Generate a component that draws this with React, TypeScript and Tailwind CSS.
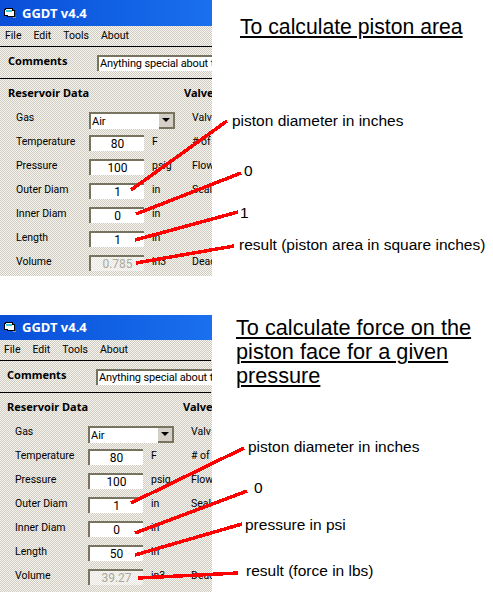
const uiFont = "font-['Roboto','Noto_Sans',sans-serif]";
const boldFont = "font-['Noto_Sans','DejaVu_Sans',sans-serif]";

type Row = { label: string; value: string; unit: string; side: string; muted?: boolean };

const pistonRows: Row[] = [
  { label: "Temperature", value: "80", unit: "F", side: "# of" },
  { label: "Pressure", value: "100", unit: "psig", side: "Flow" },
  { label: "Outer Diam", value: "1", unit: "in", side: "Seal" },
  { label: "Inner Diam", value: "0", unit: "in", side: "" },
  { label: "Length", value: "1", unit: "in", side: "" },
  { label: "Volume", value: "0.785", unit: "in3", side: "Dead", muted: true },
];

const forceRows: Row[] = [
  ...pistonRows.slice(0, 4),
  { label: "Length", value: "50", unit: "in", side: "" },
  { label: "Volume", value: "39.27", unit: "in3", side: "Dead", muted: true },
];

function WindowIcon() {
  return (
    <svg width="12" height="11" viewBox="0 0 12 11" shapeRendering="crispEdges" className="shrink-0">
      <path d="M1.5 0.5H8.5V2.5H10.5V8.5H3.5V7.5H0.5V1.5H1.5Z" fill="#fff" stroke="#000" />
      <path d="M2 2H8V4H2Z" fill="#38c8d8" />
      <path d="M9 9H12V10H9Z" fill="#9a9a90" />
    </svg>
  );
}

function Field({ value, muted }: { value: string; muted?: boolean }) {
  return (
    <div
      className={`w-[55px] h-[16px] mt-[2px] shrink-0 border-t-2 border-l-2 border-t-[#77735f] border-l-[#77735f] flex items-center justify-center text-[12px] leading-none ${muted ? "bg-white/50 text-[#aaa99a]" : "bg-white text-black"}`}
    >
      {value}
    </div>
  );
}

function GgdtWindow({ rows, titleHeight, shift, height }: { rows: Row[]; titleHeight: string; shift: string; height: string }) {
  return (
    <div
      className={`w-[212px] ${height} overflow-hidden shrink-0 ${uiFont} text-[10.5px] text-black bg-[url(data:image/svg+xml,%3Csvg%20xmlns=%27http://www.w3.org/2000/svg%27%20width=%272%27%20height=%272%27%20shape-rendering=%27crispEdges%27%3E%3Crect%20width=%272%27%20height=%272%27%20fill=%27%23f6f5f0%27/%3E%3Crect%20width=%271%27%20height=%271%27%20fill=%27%23cfcbc0%27/%3E%3Crect%20x=%271%27%20y=%271%27%20width=%271%27%20height=%271%27%20fill=%27%23cfcbc0%27/%3E%3C/svg%3E)]`}
    >
      <div className={`${titleHeight} flex items-center gap-[6px] pl-[4px] bg-gradient-to-r from-[#0a4ed8] to-[#1a70ee]`}>
        <WindowIcon />
        <span className={`${boldFont} text-white text-[13px] font-bold leading-none`}>GGDT v4.4</span>
      </div>
      <div className={shift}>
        <div className="h-[20px] flex items-center gap-[12px] pl-[5px]">
          <span>File</span>
          <span>Edit</span>
          <span>Tools</span>
          <span>About</span>
        </div>
        <div className="h-[33px] flex items-center border-y border-black pl-[8px]">
          <span className={`${boldFont} text-[11px] font-bold w-[89px] shrink-0 pb-[2px]`}>Comments</span>
          <div className="w-[130px] h-[16px] bg-white border-t-2 border-l-2 border-t-[#77735f] border-l-[#77735f] whitespace-nowrap overflow-hidden flex items-center pl-[1px] text-[11px] tracking-[-0.15px] leading-none shrink-0">
            Anything special about this
          </div>
        </div>
        <div className={`flex items-center h-[25px] pl-[8px] mt-[2px] ${boldFont} text-[11px] font-bold`}>
          <span className="w-[176px] shrink-0">Reservoir Data</span>
          <span>Valve</span>
        </div>
        <div className="flex items-center h-[24px] pl-[16px]">
          <span className="w-[73px] shrink-0">Gas</span>
          <div className="w-[86px] h-[17px] mt-[4px] bg-white border-t-2 border-l-2 border-t-[#77735f] border-l-[#77735f] flex items-center justify-between pl-[1px] text-[11px] leading-none shrink-0">
            Air
            <div className="w-[16px] h-[15px] bg-[#d4d0c8] border-r-2 border-b-2 border-r-[#77735f] border-b-[#77735f] flex items-center justify-center">
              <div className="w-0 h-0 border-x-[4px] border-x-transparent border-t-[4px] border-t-black" />
            </div>
          </div>
          <span className="ml-[17px] whitespace-nowrap">Valv</span>
        </div>
        {rows.map((row) => (
          <div key={row.label} className="flex items-center h-[24px] pl-[16px]">
            <span className="w-[73px] shrink-0">{row.label}</span>
            <Field value={row.value} muted={row.muted} />
            <span className="w-[48px] shrink-0 pl-[8px]">{row.unit}</span>
            <span className="whitespace-nowrap">{row.side}</span>
          </div>
        ))}
      </div>
    </div>
  );
}

function Heading({ lines, className }: { lines: string[]; className: string }) {
  return (
    <div className={`flex flex-col leading-[24px] underline underline-offset-2 decoration-2 ${className}`}>
      {lines.map((line) => (
        <span key={line}>{line}</span>
      ))}
    </div>
  );
}

function RedLine({ d }: { d: string }) {
  return <path d={d} stroke="#ff0000" strokeWidth="3.5" fill="none" shapeRendering="crispEdges" />;
}

export default function App() {
  return (
    <div className="relative w-[493px] h-[592px] bg-white overflow-hidden font-['Liberation_Sans',Arial,sans-serif] text-black">
      <div className="flex h-[315px]">
        <GgdtWindow rows={pistonRows} titleHeight="h-[26px]" shift="" height="h-[276px]" />
        <div className="flex flex-col text-[15.5px] leading-[18px] whitespace-nowrap">
          <Heading lines={["To calculate piston area"]} className="ml-[28px] mt-[15px] text-[21.2px]" />
          <span className="ml-[20px] mt-[73px]">piston diameter in inches</span>
          <span className="ml-[32px] mt-[32px]">0</span>
          <span className="ml-[28px] mt-[24px]">1</span>
          <span className="ml-[27px] mt-[14px]">result (piston area in square inches)</span>
        </div>
      </div>
      <div className="flex">
        <GgdtWindow rows={forceRows} titleHeight="h-[25px]" shift="-translate-x-px" height="h-[277px]" />
        <div className="flex flex-col text-[15.5px] leading-[18px] whitespace-nowrap">
          <Heading lines={["To calculate force on the", "piston face for a given", "pressure"]} className="ml-[24px] mt-[1px] text-[21.7px]" />
          <span className="ml-[36px] mt-[50px]">piston diameter in inches</span>
          <span className="ml-[42px] mt-[23px]">0</span>
          <span className="ml-[33px] mt-[19px]">pressure in psi</span>
          <span className="ml-[34px] mt-[28px]">result (force in lbs)</span>
        </div>
      </div>
      {/* hand-drawn red pointers sit over both screenshots */}
      <svg width="493" height="592" className="absolute inset-0 pointer-events-none">
        <RedLine d="M131 190L227 121" />
        <RedLine d="M136 214L241 173" />
        <RedLine d="M135 240L238 212" />
        <RedLine d="M136 263L234 246" />
        <RedLine d="M131 503L244 448" />
        <RedLine d="M135 533L247 491" />
        <RedLine d="M135 555L242 524" />
        <RedLine d="M138 578L238 573" />
      </svg>
    </div>
  );
}
